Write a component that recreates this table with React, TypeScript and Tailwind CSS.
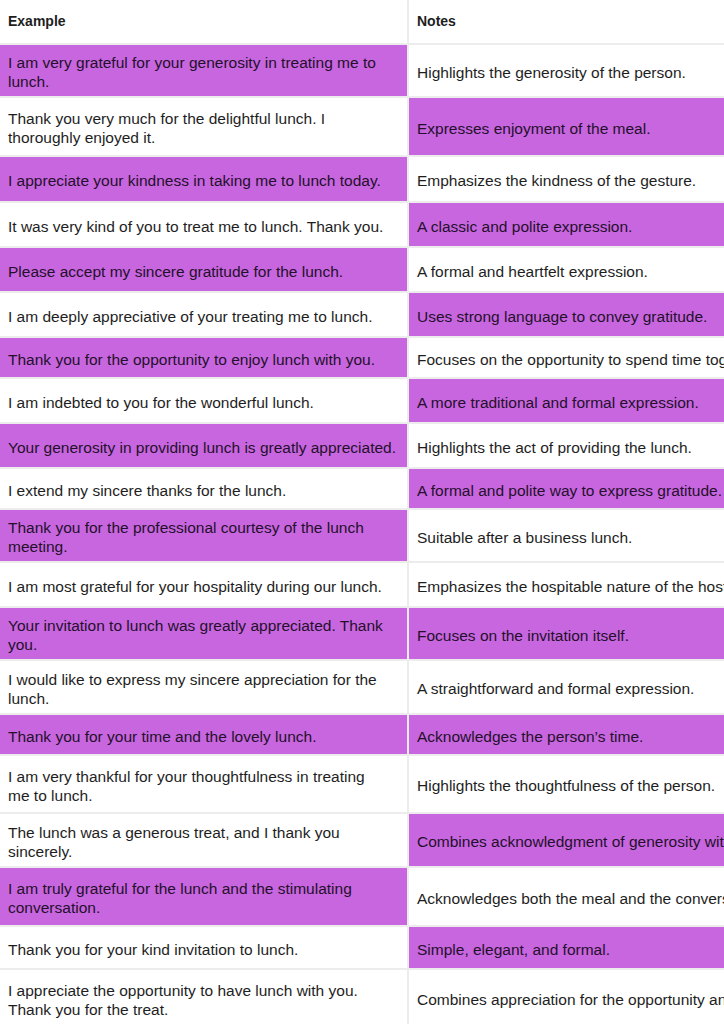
type Row = {
  example: string[];
  note: string;
  hlExample: boolean;
  hlNote: boolean;
  height: string;
};

const rows: Row[] = [
  { example: ['I am very grateful for your generosity in treating me to', 'lunch.'], note: 'Highlights the generosity of the person.', hlExample: true, hlNote: false, height: 'h-[51px]' },
  { example: ['Thank you very much for the delightful lunch. I', 'thoroughly enjoyed it.'], note: 'Expresses enjoyment of the meal.', hlExample: false, hlNote: true, height: 'h-[57px]' },
  { example: ['I appreciate your kindness in taking me to lunch today.'], note: 'Emphasizes the kindness of the gesture.', hlExample: true, hlNote: false, height: 'h-[44px]' },
  { example: ['It was very kind of you to treat me to lunch. Thank you.'], note: 'A classic and polite expression.', hlExample: false, hlNote: true, height: 'h-[43px]' },
  { example: ['Please accept my sincere gratitude for the lunch.'], note: 'A formal and heartfelt expression.', hlExample: true, hlNote: false, height: 'h-[43px]' },
  { example: ['I am deeply appreciative of your treating me to lunch.'], note: 'Uses strong language to convey gratitude.', hlExample: false, hlNote: true, height: 'h-[43px]' },
  { example: ['Thank you for the opportunity to enjoy lunch with you.'], note: 'Focuses on the opportunity to spend time together.', hlExample: true, hlNote: false, height: 'h-[39px]' },
  { example: ['I am indebted to you for the wonderful lunch.'], note: 'A more traditional and formal expression.', hlExample: false, hlNote: true, height: 'h-[43px]' },
  { example: ['Your generosity in providing lunch is greatly appreciated.'], note: 'Highlights the act of providing the lunch.', hlExample: true, hlNote: false, height: 'h-[43px]' },
  { example: ['I extend my sincere thanks for the lunch.'], note: 'A formal and polite way to express gratitude.', hlExample: false, hlNote: true, height: 'h-[39px]' },
  { example: ['Thank you for the professional courtesy of the lunch', 'meeting.'], note: 'Suitable after a business lunch.', hlExample: true, hlNote: false, height: 'h-[51px]' },
  { example: ['I am most grateful for your hospitality during our lunch.'], note: 'Emphasizes the hospitable nature of the host.', hlExample: false, hlNote: false, height: 'h-[43px]' },
  { example: ['Your invitation to lunch was greatly appreciated. Thank', 'you.'], note: 'Focuses on the invitation itself.', hlExample: true, hlNote: true, height: 'h-[51px]' },
  { example: ['I would like to express my sincere appreciation for the', 'lunch.'], note: 'A straightforward and formal expression.', hlExample: false, hlNote: false, height: 'h-[52px]' },
  { example: ['Thank you for your time and the lovely lunch.'], note: 'Acknowledges the person\u2019s time.', hlExample: true, hlNote: true, height: 'h-[39px]' },
  { example: ['I am very thankful for your thoughtfulness in treating', 'me to lunch.'], note: 'Highlights the thoughtfulness of the person.', hlExample: false, hlNote: false, height: 'h-[56px]' },
  { example: ['The lunch was a generous treat, and I thank you', 'sincerely.'], note: 'Combines acknowledgment of generosity with gratitude.', hlExample: false, hlNote: true, height: 'h-[52px]' },
  { example: ['I am truly grateful for the lunch and the stimulating', 'conversation.'], note: 'Acknowledges both the meal and the conversation.', hlExample: true, hlNote: false, height: 'h-[57px]' },
  { example: ['Thank you for your kind invitation to lunch.'], note: 'Simple, elegant, and formal.', hlExample: false, hlNote: true, height: 'h-[41px]' },
  { example: ['I appreciate the opportunity to have lunch with you.', 'Thank you for the treat.'], note: 'Combines appreciation for the opportunity and the treat.', hlExample: false, hlNote: false, height: 'h-[56px]' },
];

function Cell({ highlight, height, children }: { highlight: boolean; height: string; children: React.ReactNode }) {
  return (
    <div
      className={`flex flex-col justify-center overflow-hidden px-2 pt-[3px] ${height} ${
        highlight ? 'bg-[#c866e0] text-[#24102b]' : 'bg-white text-[#1e1e1e]'
      }`}
    >
      {children}
    </div>
  );
}

export default function App() {
  return (
    <div className="h-[1024px] w-[724px] overflow-hidden bg-white font-['Liberation_Sans',Arial,sans-serif] text-[15.5px] leading-[19px]">
      <div className="grid w-[880px] grid-cols-[407px_471px] gap-[2px] bg-[#ececec]">
        <div className="flex h-[43px] items-center bg-white px-2 text-[14px] font-bold text-[#1e1e1e]">Example</div>
        <div className="flex h-[43px] items-center bg-white px-2 text-[14px] font-bold text-[#1e1e1e]">Notes</div>
        {rows.map((row, i) => (
          <div key={i} className="contents">
            <Cell highlight={row.hlExample} height={row.height}>
              {row.example.map((line, j) => (
                <span key={j} className="whitespace-nowrap">
                  {line}
                </span>
              ))}
            </Cell>
            <Cell highlight={row.hlNote} height={row.height}>
              <span className="whitespace-nowrap">{row.note}</span>
            </Cell>
          </div>
        ))}
      </div>
    </div>
  );
}
